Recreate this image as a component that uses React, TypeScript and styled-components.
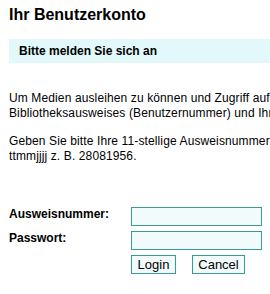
import React from "react";
import styled, { createGlobalStyle } from "styled-components";

const Global = createGlobalStyle`
  html, body { margin: 0; padding: 0; background: #fff; }
  body { font-family: "Liberation Sans", Arial, sans-serif; color: #000; overflow: hidden; }
`;

const Page = styled.div`
  width: 270px;
  height: 294px;
  padding: 0 0 0 9px;
  box-sizing: border-box;
  overflow: hidden;
`;

const Title = styled.h1`
  margin: 0;
  padding-top: 6px;
  font-size: 16px;
  font-weight: bold;
  line-height: 18px;
  white-space: nowrap;
`;

const Notice = styled.div`
  margin-top: 15px;
  width: 300px;
  height: 24px;
  background: #e2f8fa;
  box-sizing: border-box;
  padding: 0 0 0 10px;
  display: flex;
  align-items: center;
  font-size: 12px;
  font-weight: bold;
  white-space: nowrap;
`;

const Text = styled.p`
  margin: 0;
  font-size: 12px;
  line-height: 15px;
  letter-spacing: 0.12px;
  white-space: nowrap;
  & + & { margin-top: 13px; }
`;

const Intro = styled.div`
  margin-top: 28px;
`;

const Form = styled.form`
  margin-top: 43px;
  display: grid;
  grid-template-columns: 122px 131px;
  row-gap: 5px;
  align-items: start;
`;

const Label = styled.label`
  font-size: 12px;
  font-weight: bold;
  line-height: 15px;
  padding-top: 0;
`;

const Field = styled.input`
  display: block;
  width: 131px;
  height: 19px;
  box-sizing: border-box;
  border: 1px solid #3a9a94;
  background: #f2fbfb;
  margin: 0;
  padding: 0 2px;
  font: 12px "Liberation Sans", Arial, sans-serif;
`;

const Buttons = styled.div`
  grid-column: 2;
  display: flex;
  gap: 16px;
`;

const Button = styled.button<{ $w: number }>`
  display: block;
  width: ${(p) => p.$w}px;
  height: 19px;
  box-sizing: border-box;
  border: 1px solid #3a9a94;
  background: #f2fbfb;
  margin: 0;
  padding: 0;
  font: 13px/17px "Liberation Sans", Arial, sans-serif;
  color: #000;
`;

export default function App() {
  return (
    <Page>
      <Global />
      <Title>Ihr Benutzerkonto</Title>
      <Notice>Bitte melden Sie sich an</Notice>
      <Intro>
        <Text>
          Um Medien ausleihen zu können und Zugriff auf
          <br />
          Bibliotheksausweises (Benutzernummer) und Ihr
        </Text>
        <Text>
          Geben Sie bitte Ihre 11-stellige Ausweisnummer
          <br />
          ttmmjjjj z. B. 28081956.
        </Text>
      </Intro>
      <Form onSubmit={(e) => e.preventDefault()}>
        <Label>Ausweisnummer:</Label>
        <Field type="text" />
        <Label>Passwort:</Label>
        <Field type="password" />
        <Buttons>
          <Button type="submit" $w={45}>Login</Button>
          <Button type="button" $w={53}>Cancel</Button>
        </Buttons>
      </Form>
    </Page>
  );
}
